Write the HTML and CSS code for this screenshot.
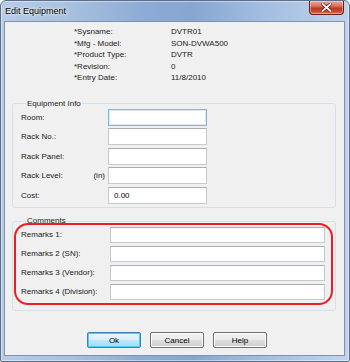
FILE: index.html
```html
<!DOCTYPE html>
<html>
<head>
<meta charset="utf-8">
<link rel="stylesheet" href="styles.css">
</head>
<body>
<div class="window">
  <div class="titlebar">
    <span class="title">Edit Equipment</span>
    <button class="close" aria-label="Close">
      <svg width="11" height="9" viewBox="0 0 11 9"><path d="M1.5 1 L9.5 8 M9.5 1 L1.5 8" stroke="#5a1010" stroke-width="3.2" stroke-linecap="square"/><path d="M1.5 1 L9.5 8 M9.5 1 L1.5 8" stroke="#fff" stroke-width="1.8" stroke-linecap="square"/></svg>
    </button>
  </div>
  <div class="client">
    <div class="info">
      <span>*Sysname:</span><span>DVTR01</span>
      <span>*Mfg - Model:</span><span>SON-DVWA500</span>
      <span>*Product Type:</span><span>DVTR</span>
      <span>*Revision:</span><span>0</span>
      <span>*Entry Date:</span><span>11/8/2010</span>
    </div>
    <fieldset class="group equip">
      <legend>Equipment Info</legend>
      <div class="row"><label class="lbl">Room:</label><input class="field focus" type="text"></div>
      <div class="row"><label class="lbl">Rack No.:</label><input class="field" type="text"></div>
      <div class="row"><label class="lbl">Rack Panel:</label><input class="field" type="text"></div>
      <div class="row"><label class="lbl">Rack Level:<span class="unit">(in)</span></label><input class="field" type="text"></div>
      <div class="row"><label class="lbl">Cost:</label><input class="field" type="text" value="0.00"></div>
    </fieldset>
    <fieldset class="group comments">
      <legend>Comments</legend>
      <div class="row"><label class="lbl">Remarks 1:</label><input class="field wide" type="text"></div>
      <div class="row"><label class="lbl">Remarks 2 (SN):</label><input class="field wide" type="text"></div>
      <div class="row"><label class="lbl">Remarks 3 (Vendor):</label><input class="field wide" type="text"></div>
      <div class="row"><label class="lbl">Remarks 4 (Division):</label><input class="field wide" type="text"></div>
    </fieldset>
    <div class="buttons">
      <button class="btn default">Ok</button>
      <button class="btn">Cancel</button>
      <button class="btn">Help</button>
    </div>
    <div class="highlight"></div>
  </div>
</div>
</body>
</html>
```

FILE: styles.css
```css
html, body {
  margin: 0;
  padding: 0;
  background: #ffffff;
}

body {
  font-family: "Liberation Sans", Arial, sans-serif;
  font-size: 8px;
  color: #1a1a1a;
}

.window {
  width: 350px;
  height: 362px;
  box-sizing: border-box;
  border: 1px solid #5b6f8c;
  border-radius: 6px 6px 2px 2px;
  background: linear-gradient(90deg, #b6cbe6 0%, #a8c0df 20%, #8eacd4 40%, #86a6d0 55%, #a3bde0 75%, #bfd3ec 100%);
  padding: 0 4px 5px 3px;
  display: flex;
  flex-direction: column;
  box-shadow: inset 0 0 0 1px rgba(255,255,255,0.45);
}

.titlebar {
  height: 20px;
  display: flex;
  align-items: flex-start;
  flex-shrink: 0;
}

.title {
  font-size: 9px;
  line-height: 11px;
  margin-top: 5px;
  margin-left: 1px;
  color: #000;
  text-shadow: 0 0 4px rgba(255,255,255,0.9), 0 0 2px rgba(255,255,255,0.9);
}

.close {
  margin-left: auto;
  margin-right: 1px;
  width: 35px;
  height: 14px;
  padding: 0;
  border: 1px solid #6e2018;
  border-top: none;
  border-radius: 0 0 4px 4px;
  background: linear-gradient(180deg, #e9a99b 0%, #d7705c 40%, #c0391f 55%, #c74a2f 80%, #e07a5a 100%);
  display: flex;
  align-items: center;
  justify-content: center;
  box-shadow: inset 0 0 0 1px rgba(255,255,255,0.35);
}

.client {
  flex: 1;
  position: relative;
  background: #f0f0f0;
  border: 1px solid #7f93ae;
  display: flex;
  flex-direction: column;
}

.info {
  display: grid;
  grid-template-columns: 97px auto;
  margin-left: 69px;
  padding-top: 4px;
  line-height: 11.5px;
}

.group {
  border: 1px solid #d5dfe5;
  border-radius: 3px;
  margin: 0 8px 0 7px;
  min-inline-size: 0;
}

.group legend {
  line-height: 8px;
  padding: 0 1px;
  margin-left: 5px;
}

.equip {
  margin-top: 16px;
  padding: 0 0 2px 8px;
}

.comments {
  margin-top: 9px;
  padding: 0 10px 9px 8px;
}

.row {
  display: flex;
  align-items: center;
}

.equip .row {
  height: 19.5px;
}

.comments .row {
  height: 19px;
}

.lbl {
  display: flex;
  justify-content: space-between;
}

.equip .lbl {
  width: 87px;
}

.comments .lbl {
  width: 89px;
}

.unit {
  margin-right: 3px;
}

.field {
  box-sizing: border-box;
  width: 99px;
  height: 17px;
  margin: 0;
  padding: 0 0 0 5px;
  border: 1px solid #c5c9d0;
  border-top-color: #abadb3;
  background: #fff;
  font: inherit;
  color: #000;
  outline: none;
}

.field.focus {
  border-color: #7eb4ea;
  box-shadow: inset 0 0 0 1px #d9ebfa;
}

.field.wide {
  flex: 1;
  width: auto;
  height: 16px;
}

.buttons {
  display: flex;
  justify-content: center;
  gap: 9px;
  margin-top: 21px;
  padding-left: 5px;
}

.btn {
  width: 54px;
  height: 16px;
  padding: 0;
  border: 1px solid #707070;
  border-radius: 2px;
  background: linear-gradient(180deg, #f2f2f2 0%, #ebebeb 48%, #dddddd 52%, #cfcfcf 100%);
  font: inherit;
  color: #000;
  box-shadow: inset 0 0 0 1px #fcfcfc;
}

.btn.default {
  border-color: #3c7fb1;
  background: linear-gradient(180deg, #eaf6fd 0%, #d9f0fc 48%, #bee6fd 52%, #a7d9f5 100%);
  box-shadow: inset 0 0 0 1px #48d0f7;
}

.highlight {
  position: absolute;
  left: 9px;
  top: 201px;
  width: 319px;
  height: 82px;
  box-sizing: border-box;
  border: 2px solid #ee1c24;
  border-radius: 14px;
  pointer-events: none;
}
```
